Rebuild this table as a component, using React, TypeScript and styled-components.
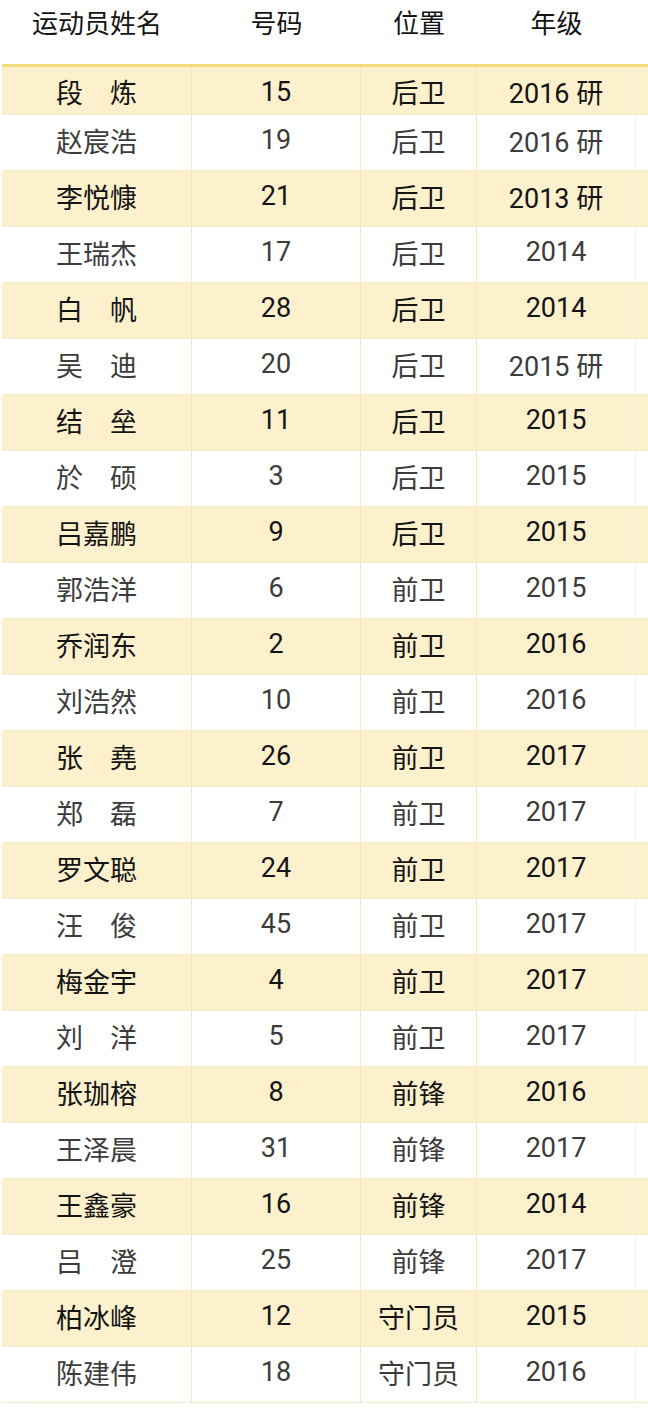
import styled, { createGlobalStyle } from "styled-components";

const GlobalStyle = createGlobalStyle`
  body {
    margin: 0;
    background: #ffffff;
    font-family: Roboto, "Noto Sans CJK SC", sans-serif;
  }
`;

const COLUMNS = "190px 169px 116px 159px";

const TableWrapper = styled.div`
  width: 648px;
  height: 1422px;
  padding-left: 2px;
  box-sizing: border-box;
  background: #ffffff;
`;

const HeaderRow = styled.div`
  display: grid;
  grid-template-columns: ${COLUMNS};
  height: 64px;
  border-bottom: 3px solid #f6dc7a;
`;

const HeaderCell = styled.div`
  display: flex;
  justify-content: center;
  padding-top: 9px;
  font-size: 26px;
  color: #141414;
  line-height: 30px;
`;

const Row = styled.div<{ $highlight: boolean; $first: boolean }>`
  display: grid;
  grid-template-columns: ${COLUMNS};
  height: ${(p) => (p.$first ? "48px" : "56px")};
  background: ${(p) => (p.$highlight ? "#fdf1cd" : "#ffffff")};
  color: ${(p) => (p.$highlight ? "#141414" : "#3c3c3c")};
  border-bottom: 1px solid #f4ebc8;
  box-sizing: border-box;
`;

const Cell = styled.div<{ $first: boolean }>`
  display: flex;
  align-items: center;
  justify-content: center;
  font-size: 27px;
  padding-bottom: ${(p) => (p.$first ? "0" : "5px")};
  padding-top: ${(p) => (p.$first ? "2px" : "0")};
  border-right: 1px solid #f3e7be;
  white-space: pre;

  &:last-child {
    border-right: 1px solid #f6f0dc;
  }
`;

type Player = [string, string, string, string];

const players: Player[] = [
  ["段　炼", "15", "后卫", "2016 研"],
  ["赵宸浩", "19", "后卫", "2016 研"],
  ["李悦慷", "21", "后卫", "2013 研"],
  ["王瑞杰", "17", "后卫", "2014"],
  ["白　帆", "28", "后卫", "2014"],
  ["吴　迪", "20", "后卫", "2015 研"],
  ["结　垒", "11", "后卫", "2015"],
  ["於　硕", "3", "后卫", "2015"],
  ["吕嘉鹏", "9", "后卫", "2015"],
  ["郭浩洋", "6", "前卫", "2015"],
  ["乔润东", "2", "前卫", "2016"],
  ["刘浩然", "10", "前卫", "2016"],
  ["张　堯", "26", "前卫", "2017"],
  ["郑　磊", "7", "前卫", "2017"],
  ["罗文聪", "24", "前卫", "2017"],
  ["汪　俊", "45", "前卫", "2017"],
  ["梅金宇", "4", "前卫", "2017"],
  ["刘　洋", "5", "前卫", "2017"],
  ["张珈榕", "8", "前锋", "2016"],
  ["王泽晨", "31", "前锋", "2017"],
  ["王鑫豪", "16", "前锋", "2014"],
  ["吕　澄", "25", "前锋", "2017"],
  ["柏冰峰", "12", "守门员", "2015"],
  ["陈建伟", "18", "守门员", "2016"],
];

const headers = ["运动员姓名", "号码", "位置", "年级"];

const App = () => {
  return (
    <TableWrapper>
      <GlobalStyle />
      <HeaderRow>
        {headers.map((h) => (
          <HeaderCell key={h}>{h}</HeaderCell>
        ))}
      </HeaderRow>
      {players.map((p, i) => (
        <Row key={p[0]} $highlight={i % 2 === 0} $first={i === 0}>
          {p.map((v, j) => (
            <Cell key={j} $first={i === 0}>
              {v}
            </Cell>
          ))}
        </Row>
      ))}
    </TableWrapper>
  );
};

export default App;
